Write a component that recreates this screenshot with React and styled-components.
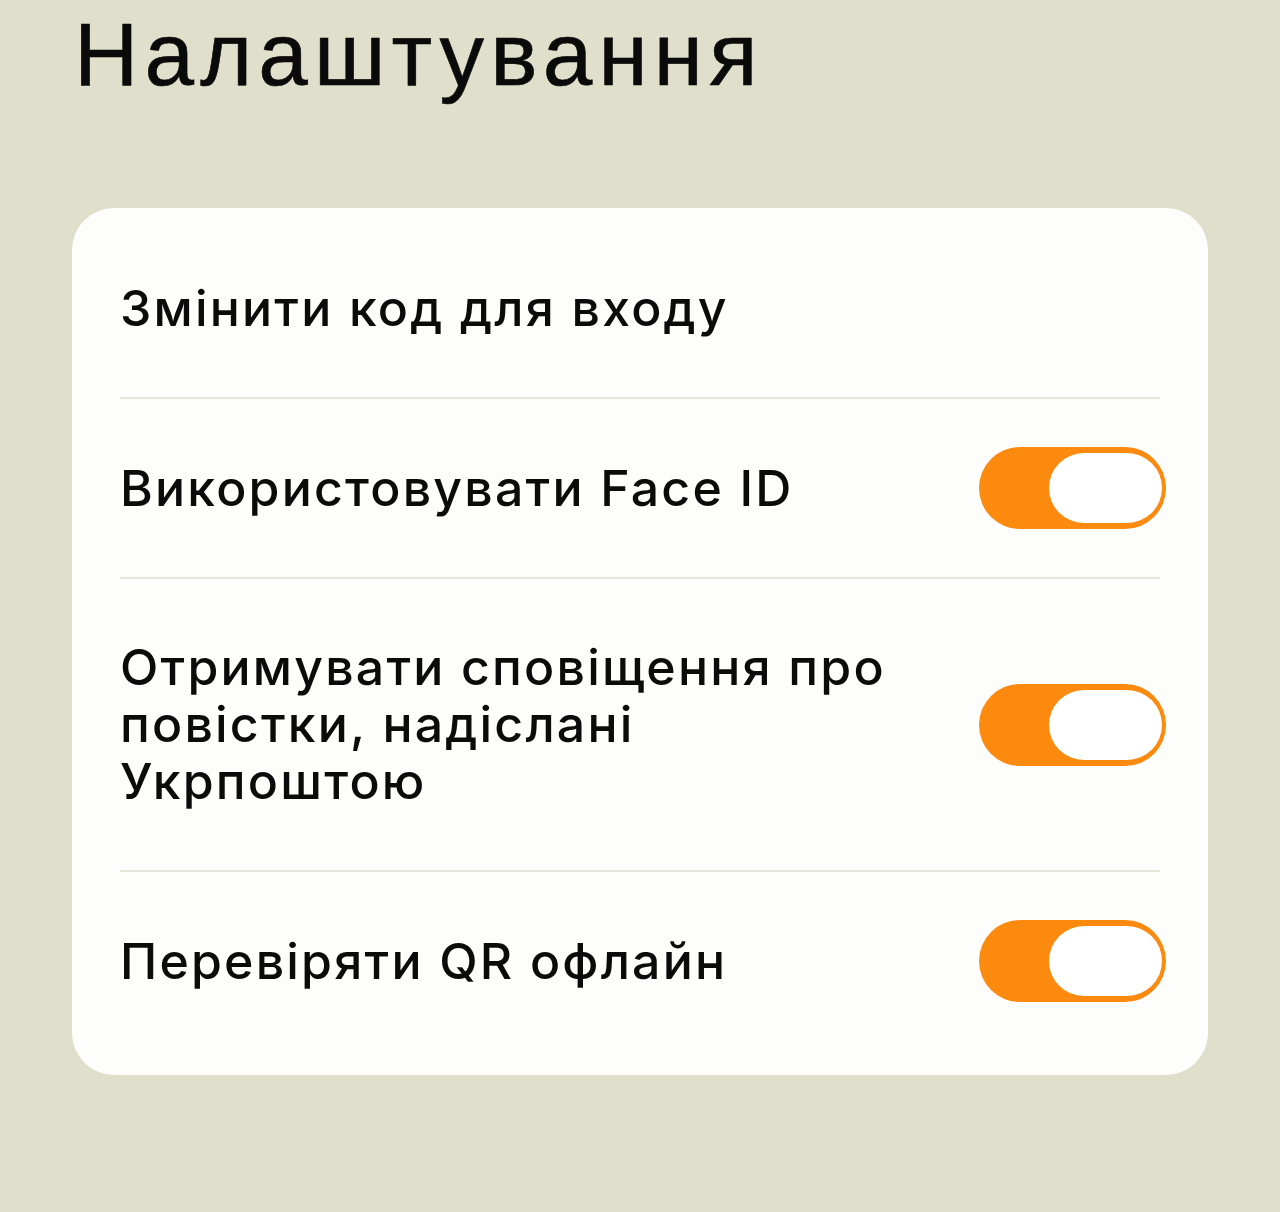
import React from "react";
import styled, { createGlobalStyle } from "styled-components";

const Global = createGlobalStyle`
  html, body { margin: 0; padding: 0; }
  body {
    background: #dfdfcb;
    font-family: "Liberation Sans", Arial, sans-serif;
    color: #0b0b0b;
  }
`;

const Page = styled.div`
  width: 1280px;
  height: 1212px;
  box-sizing: border-box;
  padding: 0 72px;
  background: #dfdfcb;
  overflow: hidden;
`;

const Title = styled.h1`
  margin: 0;
  padding: 4px 0 0 2px;
  height: 208px;
  box-sizing: border-box;
  font-family: "Liberation Sans", Arial, sans-serif;
  font-weight: 400;
  font-size: 89px;
  line-height: 100px;
  letter-spacing: 6.2px;
  color: #0a0a0a;
  -webkit-text-stroke: 0.6px #0a0a0a;
`;

const Card = styled.div`
  background: #fdfdfc;
  border-radius: 42px;
  padding: 12px 48px 25px;
  display: flex;
  flex-direction: column;
`;

const Row = styled.div`
  display: flex;
  align-items: center;
  justify-content: space-between;
  gap: 40px;
  padding: 48px 0;
  & + & {
    border-top: 2px solid #e6e6da;
  }
`;

const Label = styled.div`
  font-family: "Inter", "Liberation Sans", sans-serif;
  font-weight: 500;
  font-size: 50px;
  line-height: 57px;
  letter-spacing: 2.2px;
  padding: 12px 0;
  max-width: 790px;
  color: #0b0b0b;
`;

const Toggle = styled.div`
  flex: none;
  width: 187px;
  height: 82px;
  margin-right: -6px;
  border-radius: 41px;
  background: #fb8a0f;
  display: flex;
  align-items: center;
  justify-content: flex-end;
  padding: 0 4px;
  box-sizing: border-box;
`;

const Knob = styled.div`
  width: 113px;
  height: 70px;
  border-radius: 35px;
  background: #ffffff;
`;

const items = [
  { label: "Змінити код для входу", toggle: false },
  { label: "Використовувати Face ID", toggle: true },
  { label: "Отримувати сповіщення про повістки, надіслані Укрпоштою", toggle: true },
  { label: "Перевіряти QR офлайн", toggle: true },
];

export default function App() {
  return (
    <Page>
      <Global />
      <Title>Налаштування</Title>
      <Card>
        {items.map((it) => (
          <Row key={it.label}>
            <Label>{it.label}</Label>
            {it.toggle && (
              <Toggle>
                <Knob />
              </Toggle>
            )}
          </Row>
        ))}
      </Card>
    </Page>
  );
}
